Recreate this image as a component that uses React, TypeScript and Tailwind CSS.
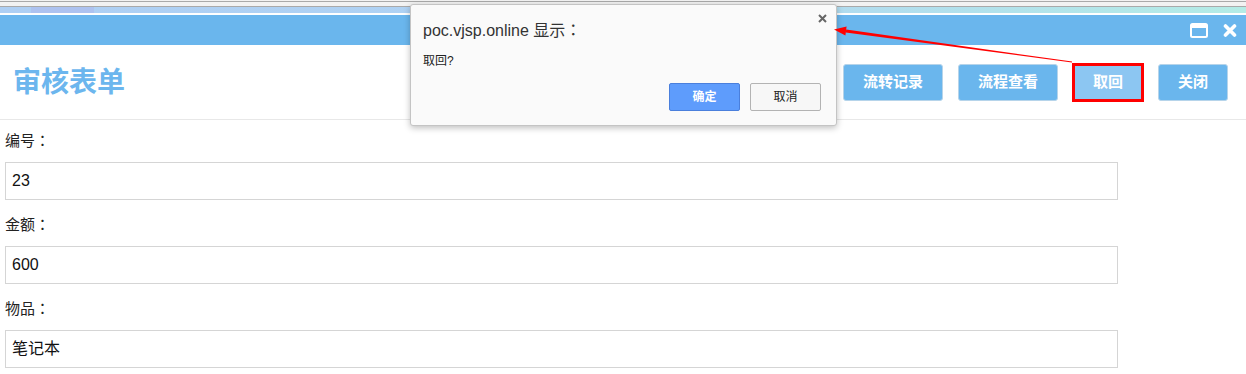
import React from 'react'

const fields = [
  { label: '编号', value: '23' },
  { label: '金额', value: '600' },
  { label: '物品', value: '笔记本' },
]

const actions = [
  { text: '流转记录', w: 'w-[100px]' },
  { text: '流程查看', w: 'w-[100px]' },
  { text: '取回', w: 'w-[70px]' },
  { text: '关闭', w: 'w-[70px]' },
]

function MaxIcon() {
  return (
    <svg width="18" height="15" viewBox="0 0 18 15">
      <rect x="1" y="1" width="16" height="13" rx="1.5" fill="none" stroke="#fff" strokeWidth="2" />
      <rect x="1" y="1" width="16" height="4" fill="#fff" />
    </svg>
  )
}

function CloseIcon() {
  return (
    <svg width="14" height="13" viewBox="0 0 14 13">
      <path d="M2.5 2 L11.5 11 M11.5 2 L2.5 11" stroke="#fff" strokeWidth="3.6" strokeLinecap="round" />
    </svg>
  )
}

// fullwidth colon, centered in its cell like the reference
function Colon() {
  return <span className="font-['Noto_Sans_CJK_TC',sans-serif]">：</span>
}

export default function App() {
  return (
    <div className="relative w-[1246px] h-[374px] overflow-hidden bg-white font-['Liberation_Sans','Noto_Sans_CJK_SC',sans-serif]">
      {/* browser strip */}
      <div className="h-[1px] bg-[#f2f2f2]" />
      <div className="h-[1px] bg-[#a9a9a9]" />
      <div className="h-[4px] bg-[#f2f2f2]" />
      <div className="h-[1px] bg-[#a9a9a9]" />
      <div className="flex h-[6px] bg-gradient-to-r from-[#aecff4] via-[#afd3f3] to-[#b4ece6]">
        <div className="ml-[31px] w-[63px] bg-[#adc2f0]" />
      </div>
      <div className="h-[2px] bg-white" />

      {/* title bar */}
      <div className="flex h-[30px] items-center justify-end gap-[15px] bg-[#6ab6ed] pr-[9px]">
        <MaxIcon />
        <CloseIcon />
      </div>

      {/* header */}
      <div className="flex h-[75px] items-center justify-between border-b border-[#e8e8e8] pl-[13px] pr-[18px]">
        <h1 className="text-[28px] font-bold leading-none text-[#6cb6ee] pt-[2px]">审核表单</h1>
        <div className="flex gap-[15px] pt-[1px]">
          {actions.map((a) => (
            <div key={a.text} className="relative">
              <button
                className={
                  'h-[37px] rounded-[3px] border text-[15px] font-bold text-white ' +
                  a.w +
                  (a.text === '取回' ? ' bg-[#8cc6f2] border-[#8cc6f2]' : ' bg-[#6ab6ed] border-[#b6d4ea]')
                }
              >
                {a.text}
              </button>
              {a.text === '取回' && (
                <div className="pointer-events-none absolute -left-[1px] -top-[1px] -right-[1px] -bottom-[1px] border-[3px] border-[#ff0000]" />
              )}
            </div>
          ))}
        </div>
      </div>

      {/* form */}
      <div className="px-[5px] pt-[10px]">
        {fields.map((f) => (
          <div key={f.label}>
            <div className="mb-[12px] h-[20px] text-[15px] leading-[20px] text-[#222]">
              {f.label}
              <Colon />
            </div>
            <div className="mb-[14px] flex h-[38px] w-[1113px] items-center border border-[#d5d5d5] pl-[6px] text-[16px] text-[#111]">
              {f.value}
            </div>
          </div>
        ))}
      </div>

      {/* alert dialog */}
      <div className="absolute left-[410px] top-[4px] h-[122px] w-[427px] rounded-[3px] border border-[#c4c4c4] bg-[#fafafa] shadow-[0_2px_6px_rgba(0,0,0,0.25)]">
        <div className="absolute right-[9px] top-[9px]">
          <svg width="9" height="9" viewBox="0 0 9 9">
            <path d="M1 1 L8 8 M8 1 L1 8" stroke="#666" strokeWidth="2" />
          </svg>
        </div>
        <div className="pl-[12px] pt-[14px] text-[16px] leading-[20px] text-[#333]">
          poc.vjsp.online 显示
          <Colon />
        </div>
        <div className="pl-[12px] pt-[12px] text-[12px] leading-[16px] text-[#222]">取回?</div>
        <div className="flex justify-end gap-[10px] pr-[15px] pt-[14px]">
          <button className="h-[28px] w-[71px] rounded-[2px] border border-[#4a7fdc] bg-[#5e9cfc] text-[12px] font-bold text-white">
            确定
          </button>
          <button className="h-[28px] w-[71px] rounded-[2px] border border-[#b3b3b3] bg-[#f7f7f7] text-[12px] text-[#222]">
            取消
          </button>
        </div>
      </div>

      {/* annotation arrow */}
      <svg className="pointer-events-none absolute left-0 top-0" width="1246" height="374">
        <polygon points="1072.05,61.6 846.2,29.5 845.8,32.5 1071.95,62.4" fill="#ff0000" />
        <polygon points="834,29.4 846.6,26.5 845.4,35.5" fill="#ff0000" />
      </svg>
    </div>
  )
}
